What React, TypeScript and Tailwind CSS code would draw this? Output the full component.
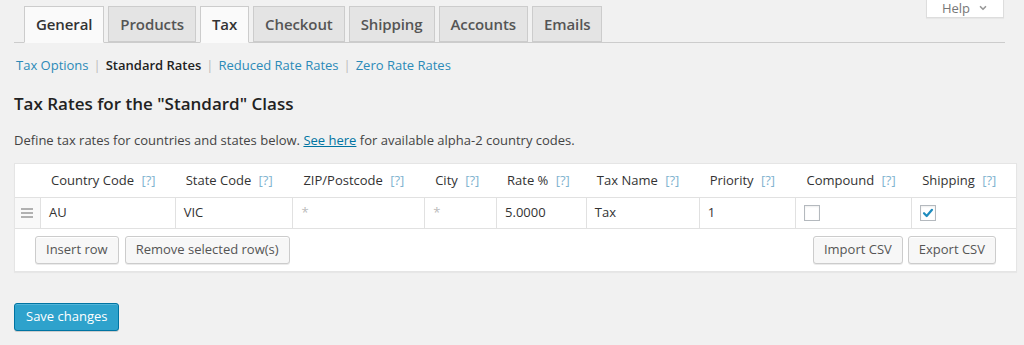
import { ChevronDown } from 'lucide-react';

const tabs = ['General', 'Products', 'Tax', 'Checkout', 'Shipping', 'Accounts', 'Emails'];

const columns = [
  { label: 'Country Code', w: 'w-[135px]' },
  { label: 'State Code', w: 'w-[118px]' },
  { label: 'ZIP/Postcode', w: 'w-[132px]' },
  { label: 'City', w: 'w-[72px]' },
  { label: 'Rate %', w: 'w-[90px]' },
  { label: 'Tax Name', w: 'w-[113px]' },
  { label: 'Priority', w: 'w-[97px]' },
  { label: 'Compound', w: 'w-[116px]' },
  { label: 'Shipping', w: 'w-[104px]' },
];

const Btn = ({ children }: { children: React.ReactNode }) => (
  <button className="h-[28px] px-[10px] rounded-[3px] border border-[#cccccc] bg-[#f7f7f7] text-[13px] text-[#555] shadow-[inset_0_1px_0_#fff,0_1px_0_rgba(0,0,0,0.08)]">
    {children}
  </button>
);

const Checkbox = ({ checked }: { checked?: boolean }) => (
  <span className="w-[16px] h-[16px] border border-[#b4b9be] bg-white shadow-[inset_0_1px_2px_rgba(0,0,0,0.07)] flex items-center justify-center">
    {checked && (
      <svg width="12" height="12" viewBox="0 0 12 12">
        <path d="M2 6.2 L4.7 9 L10 2.8" fill="none" stroke="#1e8cbe" strokeWidth="2.2" strokeLinecap="round" strokeLinejoin="round" />
      </svg>
    )}
  </span>
);

const Cell = ({ w, children, last }: { w: string; children?: React.ReactNode; last?: boolean }) => (
  <div className={`${w} h-full flex items-center px-[8px] bg-white ${last ? '' : 'border-r border-[#e1e1e1]'} text-[13px] text-[#333]`}>
    {children}
  </div>
);

export default function App() {
  return (
    <div className="relative min-h-[345px] bg-[#f1f1f1] font-['Open_Sans',sans-serif] text-[#444]">
      {/* help tab */}
      <div className="absolute right-[20px] top-[-8px] w-[78px] h-[26px] bg-white border border-[#dddddd] shadow-[0_1px_1px_rgba(0,0,0,0.04)] flex items-end justify-center gap-[8px] pb-[2px] text-[13px] text-[#777]">
        <span className="leading-none">Help</span>
        <ChevronDown size={10} strokeWidth={4} className="mb-[2px] text-[#999]" />
      </div>

      <div className="pl-[14px] pr-[19px] pt-[7px]">
        {/* tabs */}
        <div className="flex items-end gap-[4px] pl-[10px] border-b border-[#cccccc] h-[36px]">
          {tabs.map((t) => {
            const active = t === 'General' || t === 'Tax';
            return (
              <div
                key={t}
                className={`px-[11px] flex items-center border border-[#cccccc] text-[15px] font-semibold tracking-[-0.1px] ${
                  active ? 'bg-[#fafafa] text-[#333] border-b-[#fafafa] mb-[-1px] h-[37px]' : 'bg-[#e4e4e4] text-[#555] h-[36px]'
                }`}
              >
                {t}
              </div>
            );
          })}
        </div>

        {/* subnav */}
        <div className="mt-[13px] ml-[2px] text-[13px] flex items-center gap-[5px]">
          <a className="text-[#2b8ab8]">Tax Options</a>
          <span className="text-[#bbbbbb]">|</span>
          <span className="text-[#222] font-semibold">Standard Rates</span>
          <span className="text-[#bbbbbb]">|</span>
          <a className="text-[#2b8ab8]">Reduced Rate Rates</a>
          <span className="text-[#bbbbbb]">|</span>
          <a className="text-[#2b8ab8]">Zero Rate Rates</a>
        </div>

        <h3 className="mt-[16px] text-[17px] font-semibold text-[#222] leading-[24px]">Tax Rates for the "Standard" Class</h3>

        <p className="mt-[15px] text-[13px] text-[#444]">
          Define tax rates for countries and states below.{' '}
          <a className="text-[#0074a2] underline">See here</a> for available alpha-2 country codes.
        </p>

        {/* rates table */}
        <div className="mt-[13px] w-[1003px] bg-white border border-[#e5e5e5] shadow-[0_1px_1px_rgba(0,0,0,0.04)]">
          <div className="flex h-[34px] items-center border-b border-[#e1e1e1]">
            <div className="w-[26px]" />
            {columns.map((c) => (
              <div key={c.label} className={`${c.w} pl-[10px] text-[13px] text-[#333] whitespace-nowrap`}>
                {c.label} <span className="ml-[4px] text-[#7fb3cf]">[?]</span>
              </div>
            ))}
          </div>

          <div className="flex h-[31px] border-b border-[#e1e1e1]">
            <div className="w-[26px] h-full bg-[#f9f9f9] border-r border-[#e1e1e1] flex items-center justify-center">
              <svg width="12" height="10" viewBox="0 0 12 10">
                <path d="M0 1h12M0 5h12M0 9h12" stroke="#999" strokeWidth="1.3" />
              </svg>
            </div>
            <Cell w="w-[135px]">AU</Cell>
            <Cell w="w-[118px]">VIC</Cell>
            <Cell w="w-[132px]"><span className="text-[#bbb]">*</span></Cell>
            <Cell w="w-[72px]"><span className="text-[#bbb]">*</span></Cell>
            <Cell w="w-[90px]">5.0000</Cell>
            <Cell w="w-[113px]">Tax</Cell>
            <Cell w="w-[97px]">1</Cell>
            <Cell w="w-[116px]"><Checkbox /></Cell>
            <Cell w="w-[104px]" last><Checkbox checked /></Cell>
          </div>

          <div className="h-[42px] flex items-center justify-between pl-[20px] pr-[20px]">
            <div className="flex gap-[6px]">
              <Btn>Insert row</Btn>
              <Btn>Remove selected row(s)</Btn>
            </div>
            <div className="flex gap-[5px]">
              <Btn>Import CSV</Btn>
              <Btn>Export CSV</Btn>
            </div>
          </div>
        </div>

        <button className="mt-[31px] h-[28px] px-[11px] rounded-[3px] bg-[#2ea2cc] border border-[#0074a2] text-white text-[13px] shadow-[inset_0_1px_0_rgba(120,200,230,0.5),0_1px_0_rgba(0,0,0,0.15)]">
          Save changes
        </button>
      </div>
    </div>
  );
}
